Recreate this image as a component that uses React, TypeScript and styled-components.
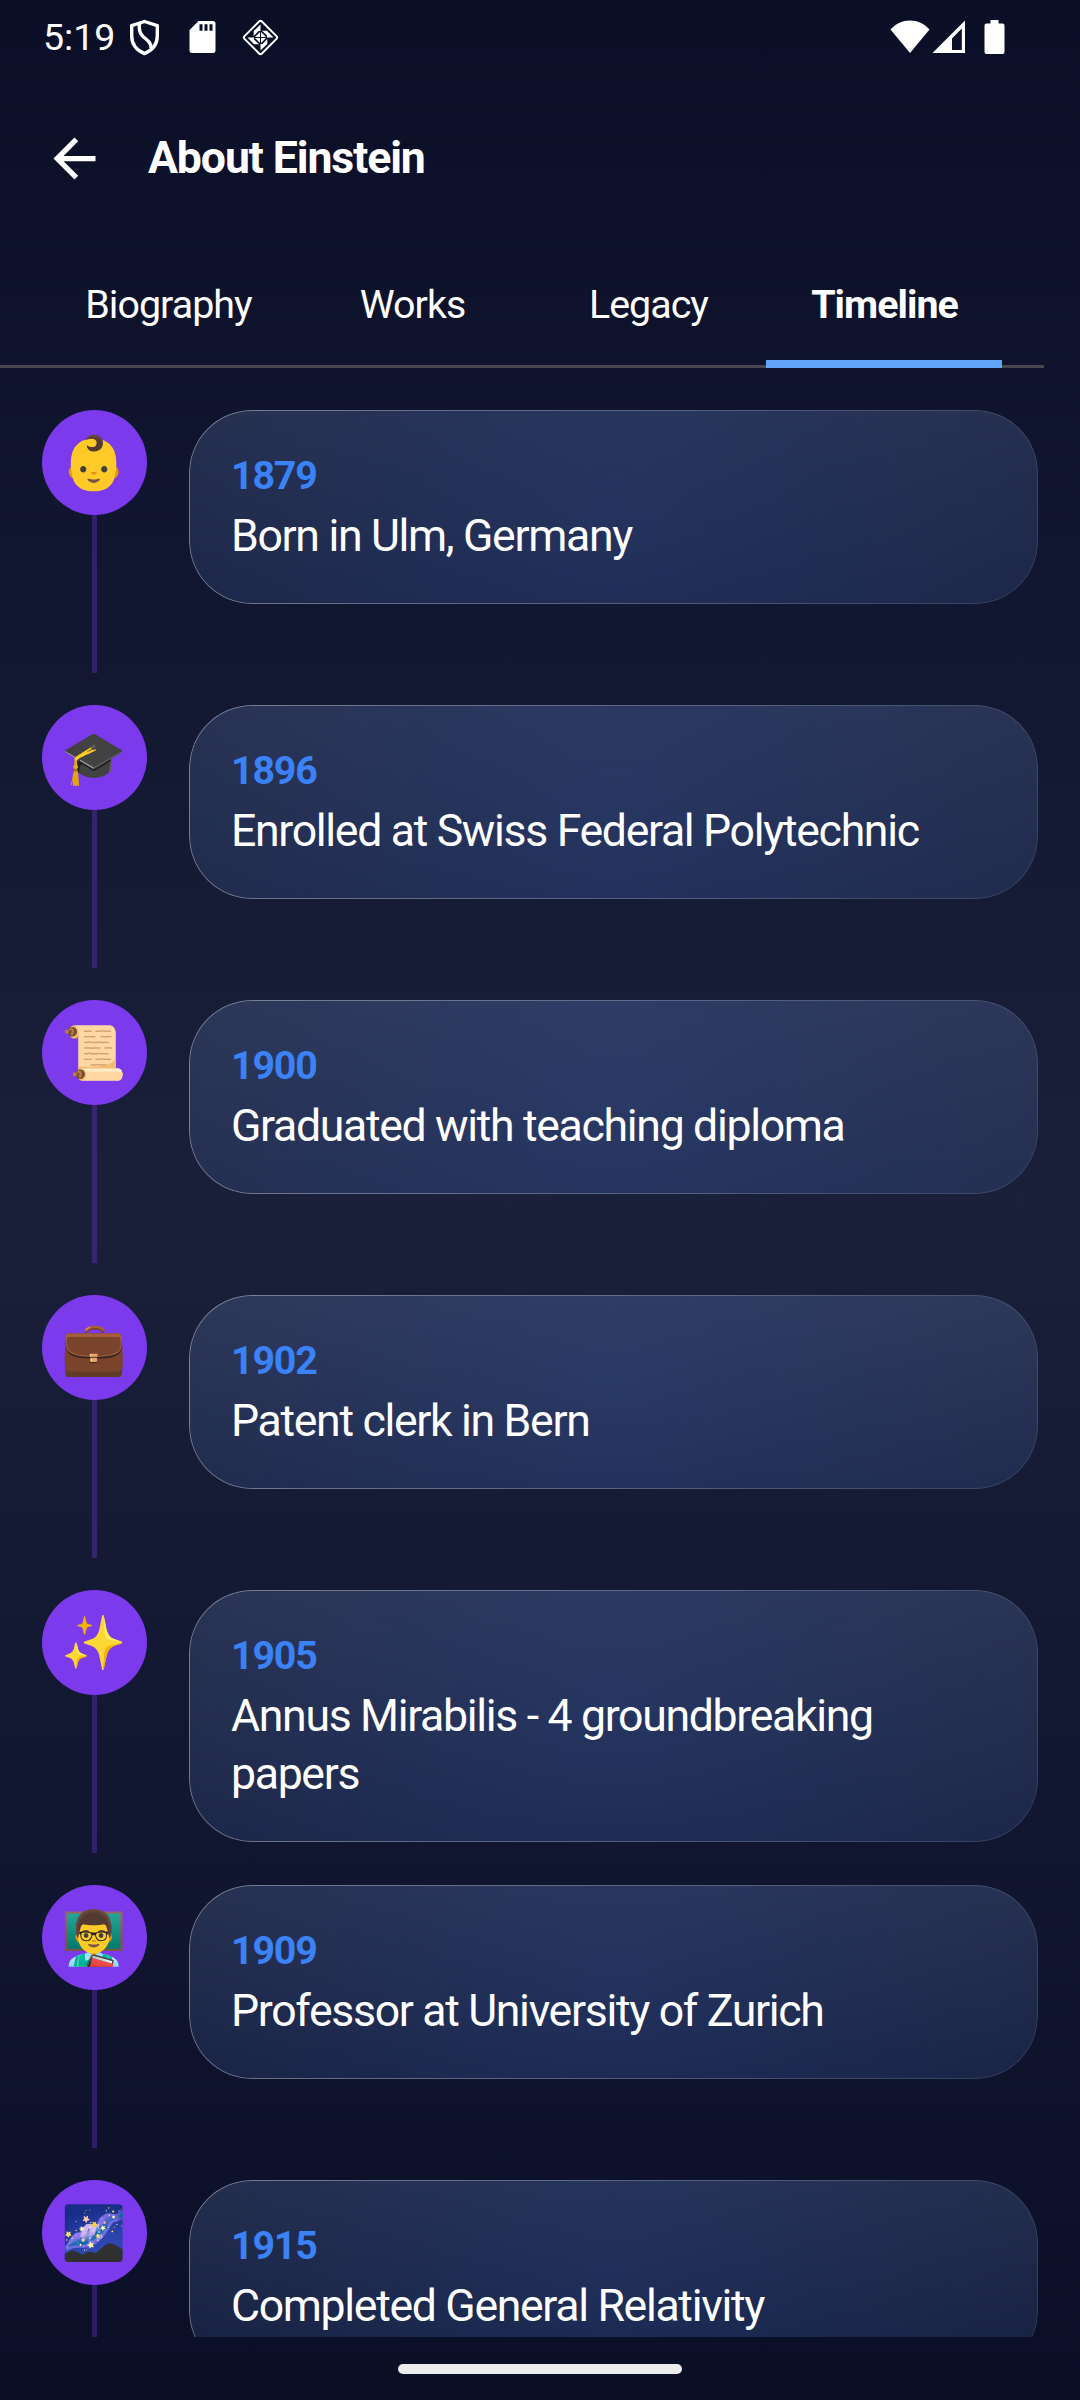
import React from 'react';
import styled, { createGlobalStyle } from 'styled-components';

const GlobalStyle = createGlobalStyle`
  *, *::before, *::after { box-sizing: border-box; }
  html, body { margin: 0; padding: 0; background: #0a0e27; }
`;

const Screen = styled.div`
  width: 1080px;
  height: 2400px;
  overflow: hidden;
  display: flex;
  flex-direction: column;
  background: linear-gradient(180deg, #0a0e27 0%, #1a1f3a 50%, #0a0e27 100%);
  color: #fff;
  font-family: Roboto, 'Noto Color Emoji', sans-serif;
`;

const StatusBar = styled.header`
  height: 74px;
  flex: none;
  display: flex;
  justify-content: space-between;
  padding: 0 75px 0 43px;
`;

const StatusGroup = styled.div`
  display: flex;
  align-items: center;
`;

const Clock = styled.span`
  width: 81px;
  font-size: 37.5px;
  line-height: 43px;
`;

const Glyph = styled.svg<{ $gap?: number }>`
  display: block;
  flex: none;
  margin-left: ${(p) => p.$gap ?? 0}px;
`;

const AppBar = styled.div`
  height: 168px;
  flex: none;
  display: flex;
  align-items: center;
  gap: 42px;
  padding: 0 43px;
`;

const BackButton = styled.button`
  display: block;
  width: 63px;
  height: 63px;
  padding: 0;
  border: 0;
  background: none;
  color: inherit;
`;

const Title = styled.h1`
  margin: 0;
  font-size: 44.6px;
  line-height: 58px;
  font-weight: 700;
  letter-spacing: -1.1px;
`;

const Tabs = styled.nav`
  width: 1044px;
  height: 126px;
  flex: none;
  display: flex;
  padding: 0 42px;
  box-shadow: inset 0 -3px #49454f;
`;

const Tab = styled.button<{ $active?: boolean; $width: number }>`
  width: ${(p) => p.$width}px;
  padding: 0 0 0 1px;
  border: 0;
  border-top: 8px solid transparent;
  border-bottom: 8px solid ${(p) => (p.$active ? '#60a5fa' : 'transparent')};
  background: none;
  color: #fff;
  font: inherit;
  font-size: 39.375px;
  line-height: 52px;
  font-weight: ${(p) => (p.$active ? 700 : 400)};
  letter-spacing: -0.95px;
`;

const List = styled.main`
  flex: none;
  height: 1969px;
  overflow: hidden;
  display: flex;
  flex-direction: column;
  gap: 32px;
  padding: 42px 42px 0;
`;

const Row = styled.article`
  flex: none;
  height: 263px;
  display: flex;
  align-items: flex-start;
  gap: 42px;
`;

const Rail = styled.div`
  width: 105px;
  flex: none;
  display: flex;
  flex-direction: column;
  align-items: center;
`;

const Badge = styled.div`
  width: 105px;
  height: 105px;
  border-radius: 50%;
  display: flex;
  align-items: center;
  justify-content: center;
  background: #7c3aed;
  font-size: 52.5px;
  line-height: 62px;
`;

const Connector = styled.div`
  width: 5px;
  height: 158px;
  background: rgba(124, 58, 237, 0.3);
`;

const Card = styled.div`
  position: relative;
  width: 849px;
  border-radius: 63px;
  padding: 42px 42px 38px;
  background:
    radial-gradient(circle 425px at 50% 50%, rgba(59, 120, 246, 0.1), rgba(59, 120, 246, 0)),
    linear-gradient(180deg, rgba(255, 255, 255, 0.08), rgba(255, 255, 255, 0.03)),
    rgba(59, 130, 246, 0.1);

  &::after {
    content: '';
    position: absolute;
    inset: 0;
    border-radius: inherit;
    padding: 1px;
    background: linear-gradient(100deg, rgba(255, 255, 255, 0.38), rgba(255, 255, 255, 0.1));
    mask: linear-gradient(#000 0 0) content-box exclude, linear-gradient(#000 0 0);
    pointer-events: none;
  }
`;

const Year = styled.div`
  margin-bottom: 9px;
  color: #3b82f6;
  font-size: 39.375px;
  line-height: 47.25px;
  font-weight: 700;
  letter-spacing: -1.15px;
`;

const Description = styled.div`
  font-size: 44.625px;
  line-height: 57.75px;
  letter-spacing: -1.33px;
`;

const NavBar = styled.footer`
  flex: 1;
  display: flex;
  justify-content: center;
  padding-top: 27px;
`;

const HomeHandle = styled.div`
  width: 284px;
  height: 10px;
  border-radius: 5px;
  background: #ececee;
`;

const events = [
  { year: '1879', icon: '👶', text: 'Born in Ulm, Germany' },
  { year: '1896', icon: '🎓', text: 'Enrolled at Swiss Federal Polytechnic' },
  { year: '1900', icon: '📜', text: 'Graduated with teaching diploma' },
  { year: '1902', icon: '💼', text: 'Patent clerk in Bern' },
  { year: '1905', icon: '✨', text: 'Annus Mirabilis - 4 groundbreaking papers' },
  { year: '1909', icon: '👨‍🏫', text: 'Professor at University of Zurich' },
  { year: '1915', icon: '🌌', text: 'Completed General Relativity' },
];

const ShieldIcon = () => (
  <Glyph $gap={5} width="31" height="37" viewBox="0 0 31 37" fill="none" stroke="#fff" strokeWidth="3.4" strokeLinejoin="round">
    <path d="M15.500 2.500 2.700 6.600V17c0 7.700 4.800 14.200 12.800 17.600C23.500 31.200 28.300 24.700 28.300 17V6.600Z" />
    <path d="M10.500 4.500C9.500 11 10.500 14.500 14.500 18c5 4 8 6.500 7.500 11.500" />
  </Glyph>
);

const SdCardIcon = () => (
  <Glyph $gap={29} width="27" height="33" viewBox="0 0 27 33">
    <path fill="#fff" fillRule="evenodd" d="M9.500 0H24a2.500 2.500 0 0 1 2.500 2.500v27A2.500 2.500 0 0 1 24 32H3a2.500 2.500 0 0 1-2.500-2.500V9ZM10.500 3.300v6.500h3V3.300Zm5 0v6.500h3V3.300Zm5 0v6.500h3V3.300Z" />
  </Glyph>
);

const DiamondIcon = () => (
  <Glyph $gap={25} width="39" height="39" viewBox="-19.500 -19.500 39 39">
    <rect x="-12.300" y="-12.300" width="24.600" height="24.600" rx="2" fill="none" stroke="#fff" strokeWidth="2" transform="rotate(45)" />
    <g fill="#fff">
      {[0, 90, 180, 270].map((a) => (
        <g key={a} transform={`rotate(${a})`}>
          <path d="M0-13V-6.500H-6.800Z" />
          <path d="M-6.800-6.500H-2L-6.800-1.500Z" />
          <path d="M-.5-5.500V-.5H-5.500Z" />
        </g>
      ))}
    </g>
  </Glyph>
);

const App = () => (
  <>
    <GlobalStyle />
    <Screen>
      <StatusBar>
        <StatusGroup>
          <Clock>5:19</Clock>
          <ShieldIcon />
          <SdCardIcon />
          <DiamondIcon />
        </StatusGroup>
        <StatusGroup>
          <Glyph width="40" height="34" viewBox="0 0 40 34">
            <path fill="#fff" d="M.5 9.500C6 3.500 12.500.5 20 .5s14 3 19.500 9L20 33Z" />
          </Glyph>
          <Glyph $gap={2} width="34" height="34" viewBox="0 0 34 34">
            <path fill="#fff" fillRule="evenodd" d="M33 .5V33H.5ZM29.800 8.500 20 18.500V30h9.800Z" />
          </Glyph>
          <Glyph $gap={18} width="21" height="35" viewBox="0 0 21 35">
            <path fill="#fff" d="M6.500 0h8v3.500h4A2 2 0 0 1 20.500 5.500v26.500a2 2 0 0 1-2 2h-16a2 2 0 0 1-2-2V5.500a2 2 0 0 1 2-2h4Z" />
          </Glyph>
        </StatusGroup>
      </StatusBar>

      <AppBar>
        <BackButton aria-label="Back">
          <svg width="63" height="63" viewBox="0 0 24 24" fill="#fff">
            <path d="M20 11H7.830l5.590-5.590L12 4l-8 8 8 8 1.410-1.410L7.830 13H20v-2z" />
          </svg>
        </BackButton>
        <Title>About Einstein</Title>
      </AppBar>

      <Tabs>
        <Tab $width={252}>Biography</Tab>
        <Tab $width={236}>Works</Tab>
        <Tab $width={236}>Legacy</Tab>
        <Tab $width={236} $active>Timeline</Tab>
      </Tabs>

      <List>
        {events.map((e) => (
          <Row key={e.year}>
            <Rail>
              <Badge>{e.icon}</Badge>
              <Connector />
            </Rail>
            <Card>
              <Year>{e.year}</Year>
              <Description>{e.text}</Description>
            </Card>
          </Row>
        ))}
      </List>

      <NavBar>
        <HomeHandle />
      </NavBar>
    </Screen>
  </>
);

export default App;
